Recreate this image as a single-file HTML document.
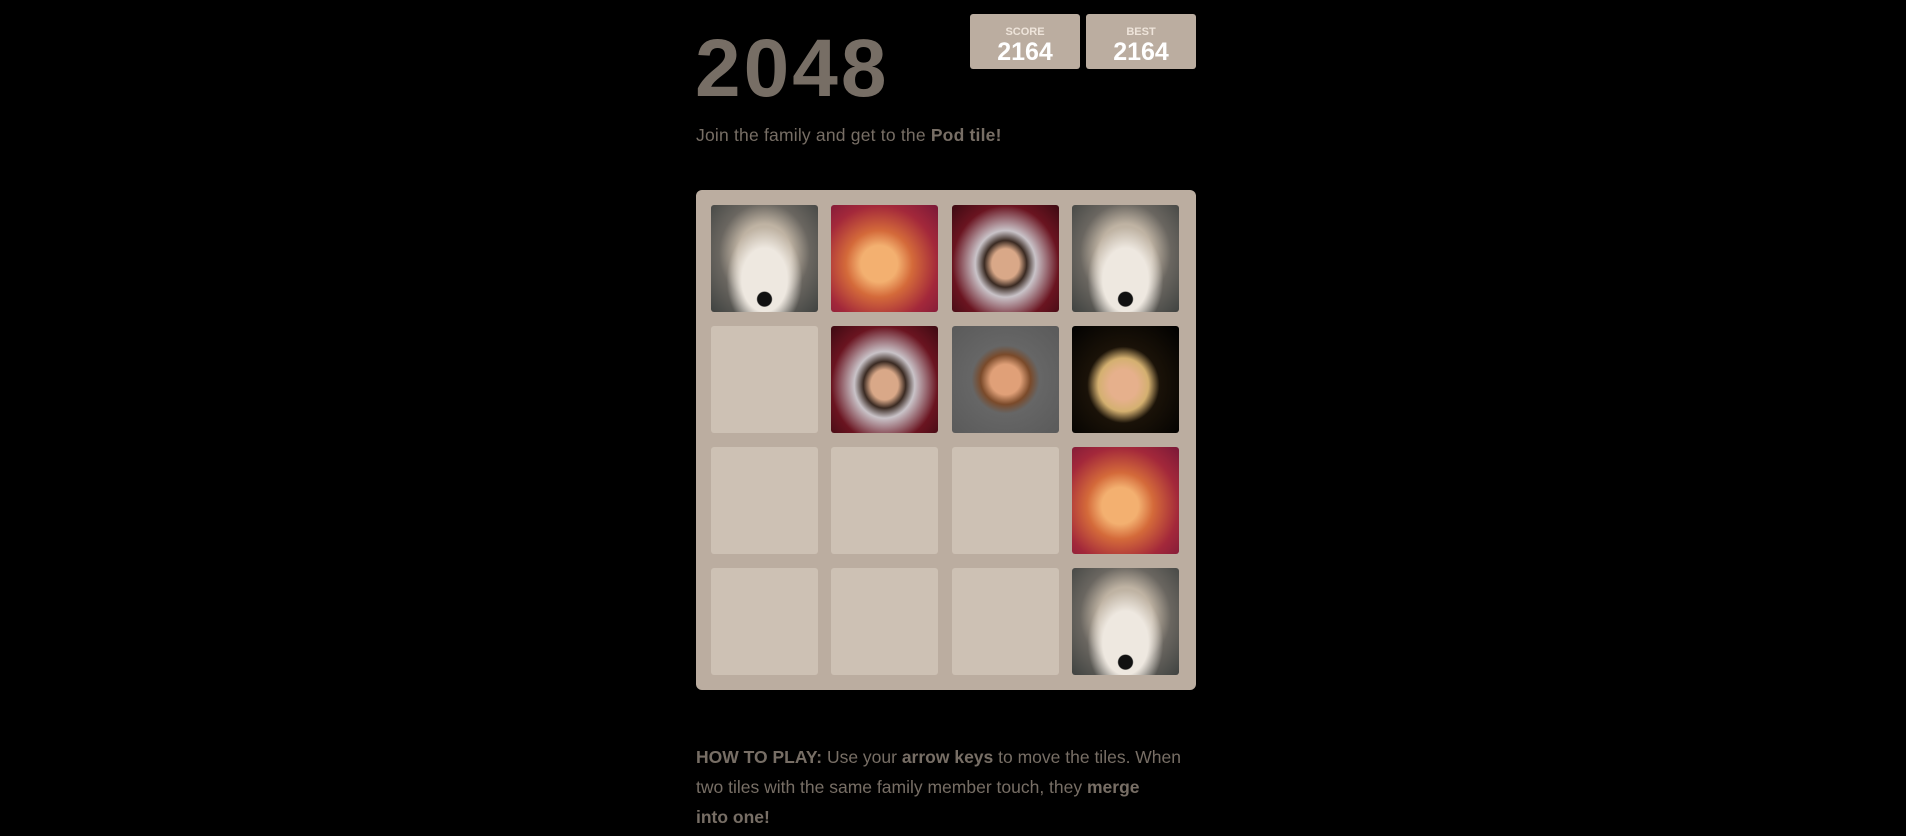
<!DOCTYPE html>
<html><head><meta charset="utf-8"><style>
html,body{margin:0;padding:0;background:#000;width:1906px;height:836px;overflow:hidden;font-family:"Liberation Sans",sans-serif;color:#776e65}
.t{position:absolute;left:695px;top:28px;font-size:82px;font-weight:bold;color:#776e65;line-height:1;letter-spacing:3px}
.sb{position:absolute;top:14px;width:110px;height:55px;background:#bbada0;border-radius:3px;text-align:center;color:#fff}
.sb .l{font-size:11px;font-weight:bold;color:#eee4da;margin-top:12px}
.sb .v{font-size:25px;font-weight:bold;line-height:1;margin-top:2px}
.sub{position:absolute;left:696px;top:125px;font-size:17.5px;letter-spacing:0.2px}
.g{position:absolute;left:696px;top:190px;width:500px;height:500px;background:#bbada0;border-radius:6px}
.c{position:absolute;width:107px;height:107px;border-radius:3px;background:#cdc1b4;overflow:hidden}
.dog{background:radial-gradient(circle at 50% 88%,#111 0 7px,transparent 8px),radial-gradient(ellipse at 50% 70%,#eee8e0 0 30%,transparent 50%),radial-gradient(ellipse at 50% 45%,#bfb3a3 0 35%,#6a6660 60%,#3f4240 100%)}
.kid{background:radial-gradient(ellipse at 45% 55%,#f3b070 0 22%,#d46a3a 40%,#a3283a 70%,#7a1838 100%)}
.man{background:radial-gradient(ellipse at 50% 55%,#d9a888 0 18%,#3a2a22 28%,#c9c3c8 40%,#6a1420 70%,#3d0a12 100%)}
.wom{background:radial-gradient(ellipse at 50% 50%,#e0a078 0 20%,#7a4a2a 33%,#666 45%,#5a5a5a 100%)}
.bl{background:radial-gradient(ellipse at 48% 55%,#e6b08c 0 18%,#d4b070 32%,#1a1208 46%,#000 100%)}
.h{position:absolute;left:696px;top:742px;width:520px;font-size:17.5px;line-height:30px;white-space:nowrap}
b{font-weight:bold}
</style></head><body>
<div class="t">2048</div>
<div class="sb" style="left:970px"><div class="l">SCORE</div><div class="v">2164</div></div>
<div class="sb" style="left:1086px"><div class="l">BEST</div><div class="v">2164</div></div>
<div class="sub">Join the family and get to the <b>Pod tile!</b></div>
<div class="g">
<div class="c dog" style="left:15px;top:15px"></div>
<div class="c kid" style="left:135px;top:15px"></div>
<div class="c man" style="left:256px;top:15px"></div>
<div class="c dog" style="left:376px;top:15px"></div>
<div class="c" style="left:15px;top:136px"></div>
<div class="c man" style="left:135px;top:136px"></div>
<div class="c wom" style="left:256px;top:136px"></div>
<div class="c bl" style="left:376px;top:136px"></div>
<div class="c" style="left:15px;top:257px"></div>
<div class="c" style="left:135px;top:257px"></div>
<div class="c" style="left:256px;top:257px"></div>
<div class="c kid" style="left:376px;top:257px"></div>
<div class="c" style="left:15px;top:378px"></div>
<div class="c" style="left:135px;top:378px"></div>
<div class="c" style="left:256px;top:378px"></div>
<div class="c dog" style="left:376px;top:378px"></div>
</div>
<div class="h"><b>HOW TO PLAY:</b> Use your <b>arrow keys</b> to move the tiles. When<br>two tiles with the same family member touch, they <b>merge</b><br><b>into one!</b></div>
</body></html>
